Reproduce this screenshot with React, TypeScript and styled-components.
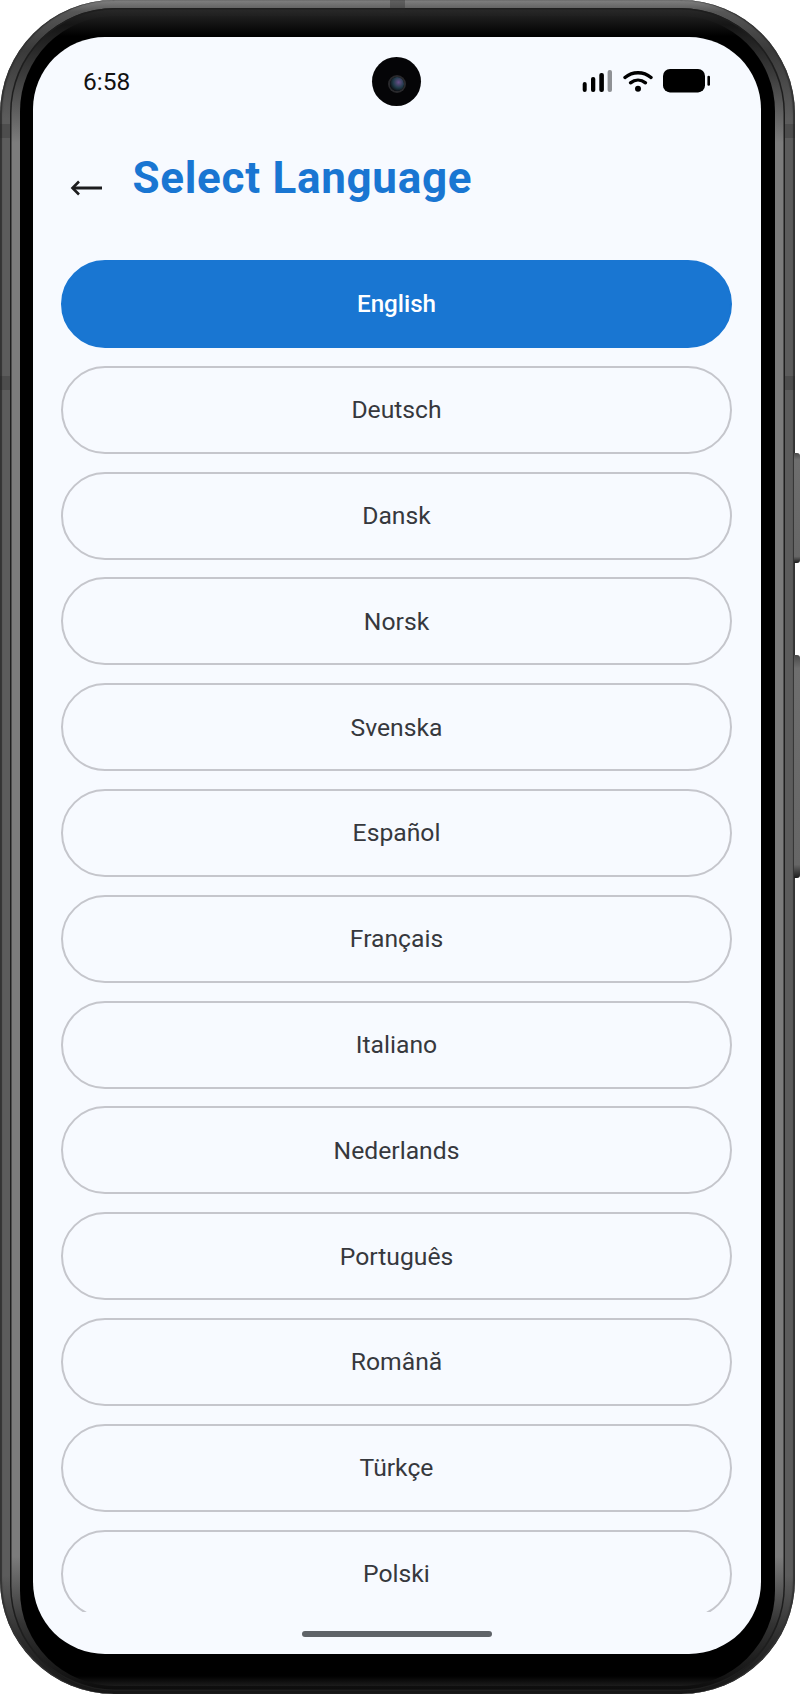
import React from "react";
import styled, { createGlobalStyle } from "styled-components";

const GlobalStyle = createGlobalStyle`
  html, body {
    margin: 0;
    padding: 0;
    background: #ffffff;
  }
  * {
    box-sizing: border-box;
  }
`;

const Page = styled.div`
  width: 800px;
  height: 1694px;
  position: relative;
  overflow: hidden;
`;

// outer metal band, then the lighter inner band, then the black glass edge
const Device = styled.div`
  width: 795px;
  height: 1694px;
  padding: 8px 10px 3px 10px;
  border-radius: 114px;
  background: linear-gradient(180deg, #808080 0, #565656 0.7%, #3a3a3a 3%, #5c5c5c 7%, #5c5c5c 93%, #2a2a2a 97%, #161616 100%);
  box-shadow: inset 2px 0 1px #333, inset -2px 0 1px #333;
`;

const Band = styled.div`
  height: 100%;
  padding: 8px 10px 5px 10px;
  border-radius: 105px;
  background: linear-gradient(180deg, #2a2a2a 0, #151515 1%, #3c3c3c 4%, #7c7c7c 8%, #7c7c7c 92%, #333 96%, #0c0c0c 100%);
  box-shadow: inset 0 0 0 1.5px #1e1e1e;
`;

const Bezel = styled.div`
  height: 100%;
  padding: 21px 14px 32px 13px;
  border-radius: 95px;
  background: linear-gradient(180deg, #1e1e1e 0, #000 20px, #000 calc(100% - 10px), #1c1c1c 100%);
`;

const SideKey = styled.div<{ $top: number; $height: number }>`
  position: absolute;
  right: 0;
  top: ${(p) => p.$top}px;
  height: ${(p) => p.$height}px;
  width: 6px;
  border-radius: 0 3px 3px 0;
  background: linear-gradient(180deg, #4a4a4a 0%, #6e6e6e 6%, #666 94%, #1c1c1c 100%);
`;

const AntennaLine = styled.div<{ $top: number; $side: "left" | "right" }>`
  position: absolute;
  ${(p) => p.$side}: ${(p) => (p.$side === "left" ? 0 : 5)}px;
  top: ${(p) => p.$top}px;
  width: 10px;
  height: 14px;
  background: rgba(30, 30, 30, 0.25);
`;

const TopSlot = styled.div`
  position: absolute;
  left: 390px;
  top: 0;
  width: 15px;
  height: 13px;
  background: rgba(40, 40, 40, 0.35);
`;

const Screen = styled.div`
  height: 100%;
  display: flex;
  flex-direction: column;
  position: relative;
  overflow: hidden;
  border-radius: 72px;
  background: #f7faff;
  font-family: Roboto, "Liberation Sans", sans-serif;
`;

const StatusBar = styled.div`
  height: 71px;
  flex: none;
  padding: 17px 51px 0 50px;
  display: flex;
  align-items: center;
  justify-content: space-between;
`;

const Clock = styled.span`
  font-size: 24.5px;
  color: #111;
`;

const StatusIcons = styled.div`
  display: flex;
  align-items: center;
  gap: 10.5px;
`;

const Camera = styled.div`
  position: absolute;
  left: 339px;
  top: 20px;
  width: 49px;
  height: 49px;
  border-radius: 50%;
  background: #050507;
  display: flex;
  align-items: center;
  justify-content: center;
`;

const Lens = styled.div`
  width: 14px;
  height: 14px;
  margin-top: 4px;
  border-radius: 50%;
  background: radial-gradient(circle at 62% 38%, #6a4f8a 0%, #1f3a48 45%, #0a0a0e 78%);
  box-shadow: 0 0 0 2px #29292c;
`;

const Header = styled.div`
  height: 137px;
  flex: none;
  padding-left: 37px;
  display: flex;
  align-items: center;
  gap: 30.5px;
`;

const BackButton = styled.button`
  border: 0;
  padding: 0;
  margin-top: 22px;
  background: none;
  display: flex;
`;

const Title = styled.h1`
  margin: 2px 0 0;
  font-size: 44px;
  line-height: 50px;
  font-weight: 700;
  letter-spacing: 0.7px;
  color: #1976d2;
`;

const LanguageList = styled.div`
  flex: 1;
  min-height: 0;
  margin-top: 15px;
  margin-bottom: 42px;
  padding: 0 29px 0 28px;
  display: flex;
  flex-direction: column;
  gap: 17.8px;
  overflow: hidden;
`;

const LanguageButton = styled.button<{ $selected?: boolean }>`
  flex: none;
  height: 88px;
  width: 100%;
  border-radius: 44px;
  border: 2px solid ${(p) => (p.$selected ? "#1976d2" : "#c5c6cc")};
  background: ${(p) => (p.$selected ? "#1976d2" : "transparent")};
  color: ${(p) => (p.$selected ? "#ffffff" : "#36383d")};
  font-family: inherit;
  font-size: ${(p) => (p.$selected ? 24.2 : 24.7)}px;
  font-weight: ${(p) => (p.$selected ? 500 : 450)};
`;

const HomeBar = styled.div`
  position: absolute;
  left: 269px;
  bottom: 17px;
  width: 190px;
  height: 6px;
  border-radius: 3px;
  background: #5f6368;
`;

const languages = [
  "English",
  "Deutsch",
  "Dansk",
  "Norsk",
  "Svenska",
  "Español",
  "Français",
  "Italiano",
  "Nederlands",
  "Português",
  "Română",
  "Türkçe",
  "Polski",
];

const SignalIcon = () => (
  <svg width="30" height="22" viewBox="0 0 30 22">
    <rect x="0.7" y="12" width="4" height="10" rx="2" fill="#000" />
    <rect x="9" y="7" width="4.3" height="15" rx="2" fill="#000" />
    <rect x="17.3" y="3" width="4.6" height="19" rx="2" fill="#000" />
    <rect x="25.6" y="0" width="4.4" height="22" rx="2" fill="#8f9195" />
  </svg>
);

const WifiIcon = () => (
  <svg width="30" height="22" viewBox="0 0 30 22" fill="none" stroke="#000" strokeWidth="3.4" strokeLinecap="round">
    <path d="M2 7.5C9.5 1.2 20.5 1.2 28 7.5" />
    <path d="M7.5 12.8C12 9.2 18 9.2 22.5 12.8" />
    <circle cx="15" cy="18.8" r="3" fill="#000" stroke="none" />
  </svg>
);

const BatteryIcon = () => (
  <svg width="47" height="24" viewBox="0 0 47 24">
    <rect x="0" y="0" width="42" height="23.4" rx="7" fill="#000" />
    <rect x="44.4" y="6.7" width="2.6" height="10" rx="1.2" fill="#000" />
  </svg>
);

const BackArrow = () => (
  <svg width="32" height="16" viewBox="0 0 32 16" fill="none" stroke="#1c1c1e" strokeWidth="3">
    <path d="M32 8H3" />
    <path d="M9 1.5L2.5 8L9 14.5" strokeWidth="2.6" />
  </svg>
);

export default function App() {
  return (
    <Page>
      <GlobalStyle />
      <Device>
        <Band>
          <Bezel>
            <Screen>
              <StatusBar>
                <Clock>6:58</Clock>
                <StatusIcons>
                  <SignalIcon />
                  <WifiIcon />
                  <BatteryIcon />
                </StatusIcons>
              </StatusBar>
              <Camera>
                <Lens />
              </Camera>
              <Header>
                <BackButton>
                  <BackArrow />
                </BackButton>
                <Title>Select Language</Title>
              </Header>
              <LanguageList>
                {languages.map((name, i) => (
                  <LanguageButton key={name} $selected={i === 0}>
                    {name}
                  </LanguageButton>
                ))}
              </LanguageList>
              <HomeBar />
            </Screen>
          </Bezel>
        </Band>
      </Device>
      <TopSlot />
      <AntennaLine $side="left" $top={124} />
      <AntennaLine $side="left" $top={376} />
      <AntennaLine $side="right" $top={124} />
      <AntennaLine $side="right" $top={376} />
      <SideKey $top={453} $height={110} />
      <SideKey $top={655} $height={223} />
    </Page>
  );
}
